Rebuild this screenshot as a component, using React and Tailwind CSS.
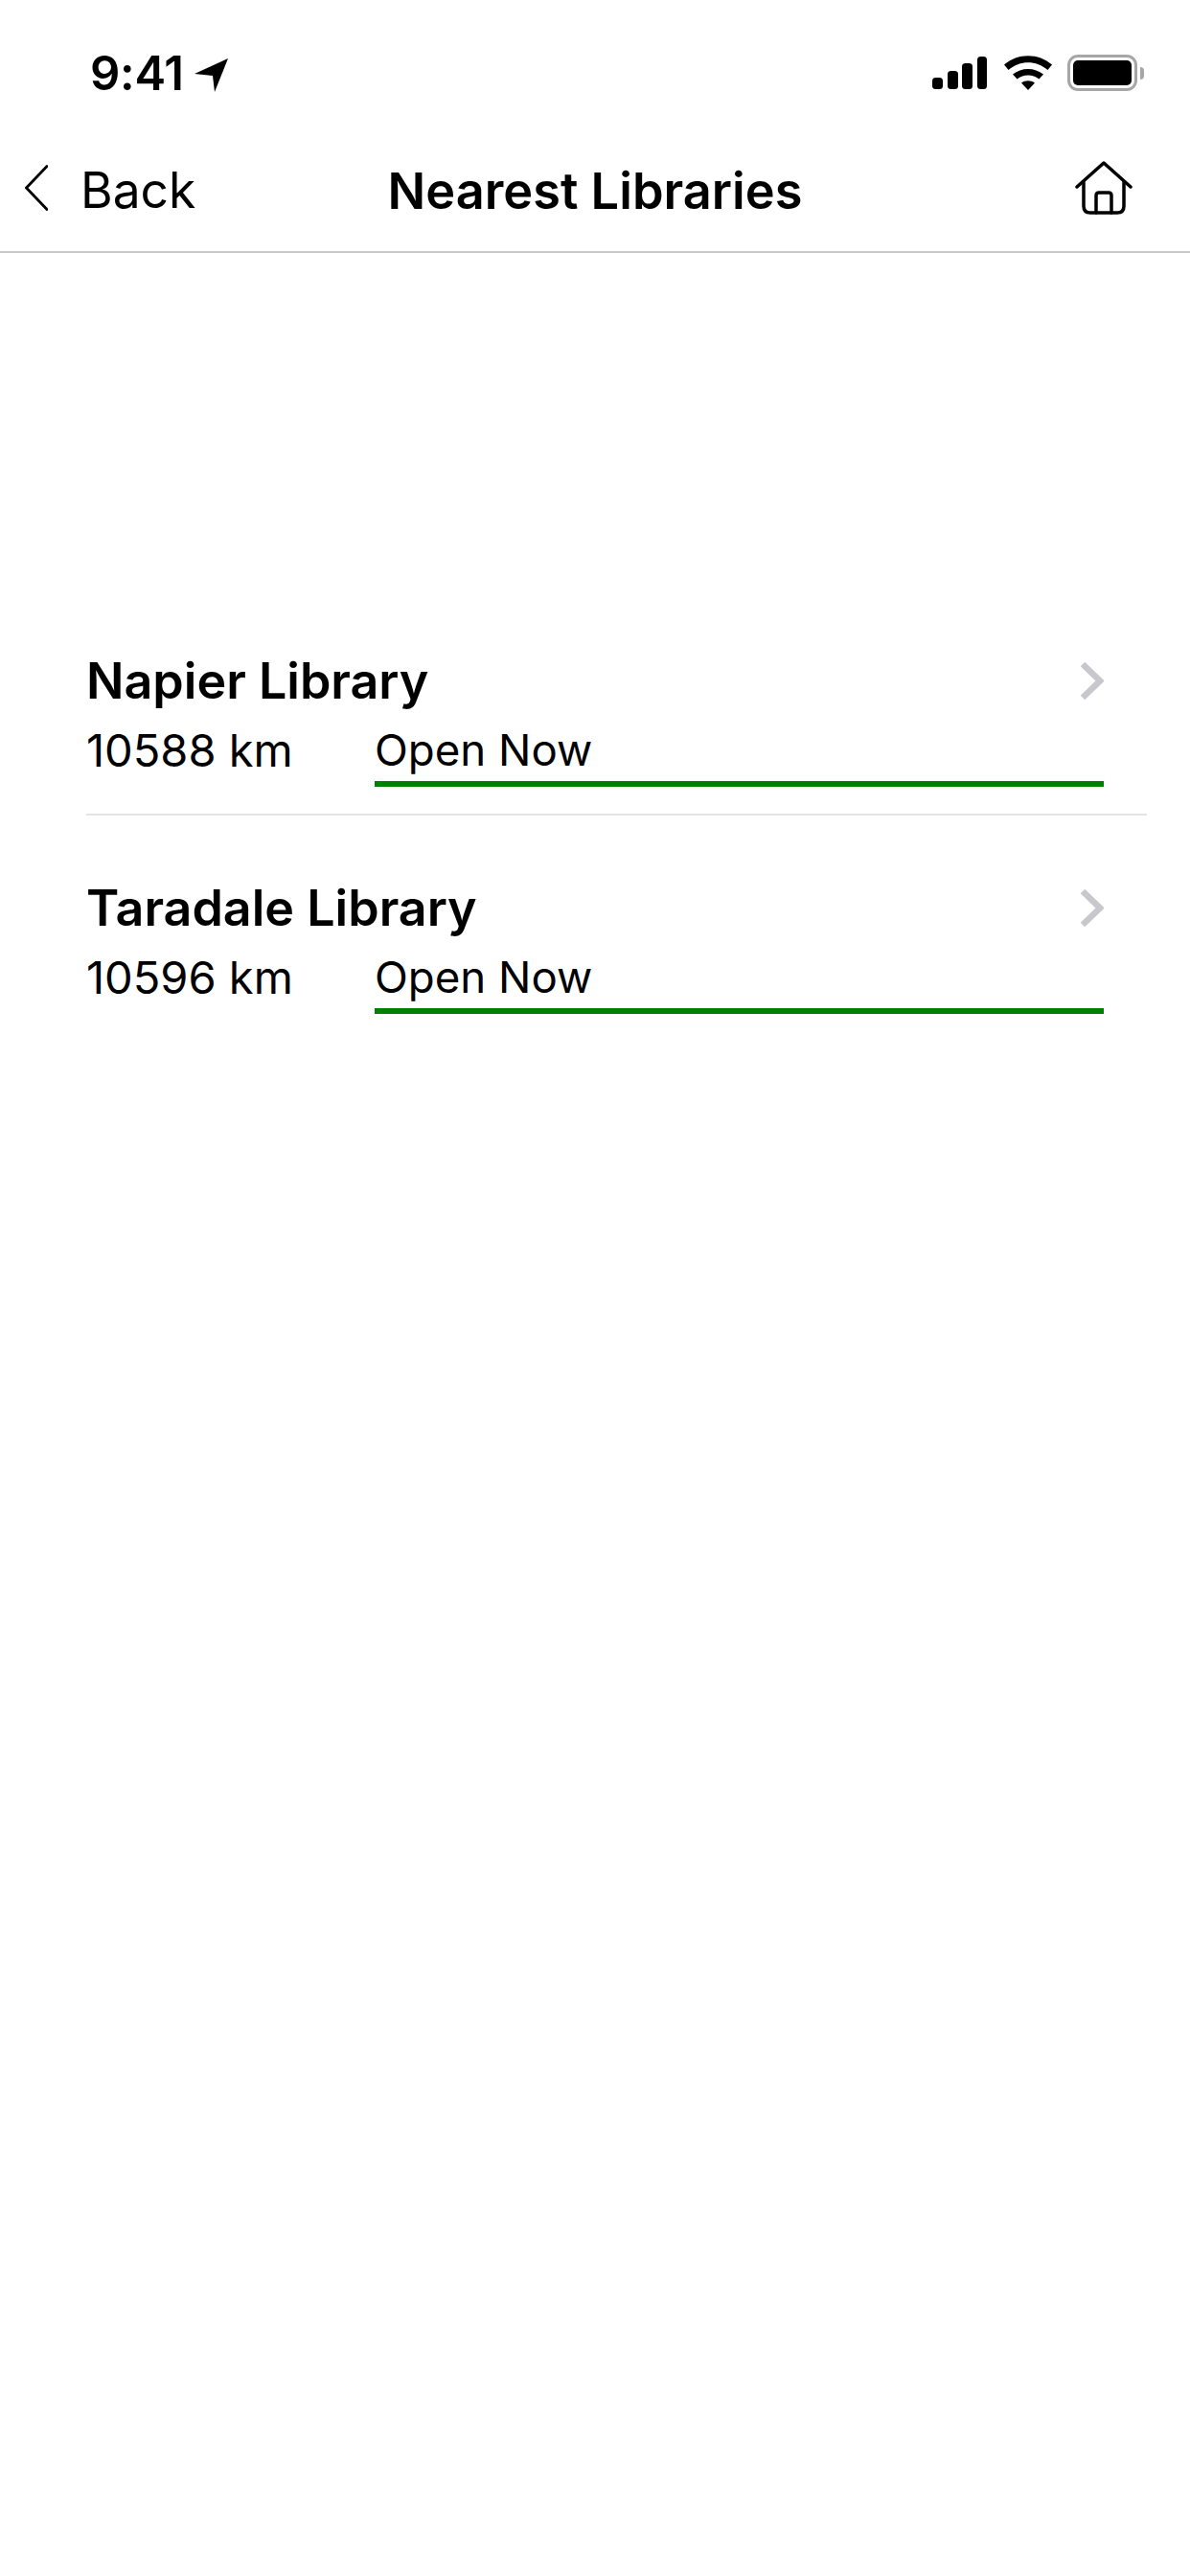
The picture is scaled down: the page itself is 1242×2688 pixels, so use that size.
import React from "react";

const libraries = [
  { name: "Napier Library", distance: "10588 km", status: "Open Now" },
  { name: "Taradale Library", distance: "10596 km", status: "Open Now" },
];

const StatusBar = () => (
  <div className="h-[132px] flex items-start justify-between pt-[51px] pl-[94px] pr-[49px]">
    <div className="flex items-center gap-[11px] h-[52px]">
      <span className="text-[49px] leading-[52px] font-semibold tracking-[-0.25px] text-black">
        9:41
      </span>
      <svg width="36" height="36" viewBox="0 0 36 36" className="mt-[4px]">
        <path d="M0 16 L35 0 L21 35 L19 18 Z" fill="#000" />
      </svg>
    </div>

    <div className="flex items-center gap-[18px] h-[44px] mt-[3px]">
      {/* Signal */}
      <svg width="57" height="34" viewBox="0 0 57 34">
        <rect x="0" y="22" width="11" height="12" rx="3.5" fill="#000" />
        <rect x="16" y="15" width="11" height="19" rx="3.5" fill="#000" />
        <rect x="31" y="7" width="11" height="27" rx="3.5" fill="#000" />
        <rect x="47" y="0" width="10" height="34" rx="3.5" fill="#000" />
      </svg>
      {/* Wifi */}
      <svg width="50" height="36" viewBox="0 0 50 36">
        <path d="M0 9.5 C14 -3 36 -3 50 9.5 L45.500 15 C33.500 4.500 16.500 4.500 4.500 15 Z" fill="#000" />
        <path d="M9 19.500 C18 12 32 12 41 19.500 L36.500 24.500 C29.500 19 20.500 19 13.500 24.500 Z" fill="#000" />
        <path d="M18 28.500 C22 25.500 28 25.500 32 28.500 L25 36 Z" fill="#000" />
      </svg>
      {/* Battery */}
      <div className="flex items-center gap-[3px] -ml-[2px] -mr-[1px]">
        <div className="w-[73px] h-[38px] rounded-[11px] border-[3px] border-[#a6a6a6] p-[3px]">
          <div className="w-full h-full rounded-[5px] bg-black" />
        </div>
        <div className="w-[4px] h-[13px] rounded-r-[4px] bg-[#a6a6a6]" />
      </div>
    </div>
  </div>
);

const NavBar = () => (
  <div className="h-[132px] grid grid-cols-[1fr_auto_1fr] items-center pt-[3px] border-b-[2px] border-[#c8c8cc]">
    <div className="flex items-center gap-[34px] pl-[26px]">
      <svg width="24" height="48" viewBox="0 0 24 48" className="-mt-[6px]">
        <path d="M23 1.500 L1.500 24 L23 46.500" fill="none" stroke="#000" strokeWidth="2.800" strokeLinecap="round" strokeLinejoin="miter" />
      </svg>
      <span className="text-[51.5px] leading-[60px] text-black -mt-[2px]">Back</span>
    </div>
    <span className="text-[52.3px] leading-[60px] font-semibold text-black">
      Nearest Libraries
    </span>
    <div className="flex justify-end pr-[60px]">
      <svg width="60" height="56" viewBox="0 0 60 56" fill="none" stroke="#000" strokeWidth="3.500" strokeLinecap="round" strokeLinejoin="round" className="-mt-[6px]">
        <path d="M2 27 L30 2 L58 27" />
        <path d="M9 22 V47 Q9 54 16 54 H44 Q51 54 51 47 V22" />
        <path d="M22 54 V36 Q22 33 25 33 H35 Q38 33 38 36 V54" />
      </svg>
    </div>
  </div>
);

const LibraryRow = ({ library, last }) => (
  <div className="pl-[90px] pr-[45px]">
    <div className={`pt-[66px] ${last ? "" : "border-b-[2px] border-[#e4e4e6] pb-[28px]"}`}>
      <div className="pr-[45px]">
        <div className="flex items-center justify-between h-[62px]">
          <span className="text-[52px] leading-[62px] font-semibold text-black">
            {library.name}
          </span>
          <svg width="25" height="41" viewBox="0 0 25 41" className="-mt-[2px]">
            <path d="M3 3 L21 20.500 L3 38" fill="none" stroke="#c7c7cc" strokeWidth="6.500" />
          </svg>
        </div>
        <div className="flex mt-[12px]">
          <span className="w-[301px] text-[47px] leading-[58px] text-black">
            {library.distance}
          </span>
          <span className="flex-1 text-[45.600px] leading-[58px] text-black border-b-[6px] border-[#008000] pb-[3px]">
            {library.status}
          </span>
        </div>
      </div>
    </div>
  </div>
);

export default function App() {
  return (
    <div className="w-[1242px] h-[2688px] bg-white font-['Inter',sans-serif]">
      <StatusBar />
      <NavBar />
      <div className="pt-[350px]">
        {libraries.map((library, i) => (
          <LibraryRow key={library.name} library={library} last={i === libraries.length - 1} />
        ))}
      </div>
    </div>
  );
}
